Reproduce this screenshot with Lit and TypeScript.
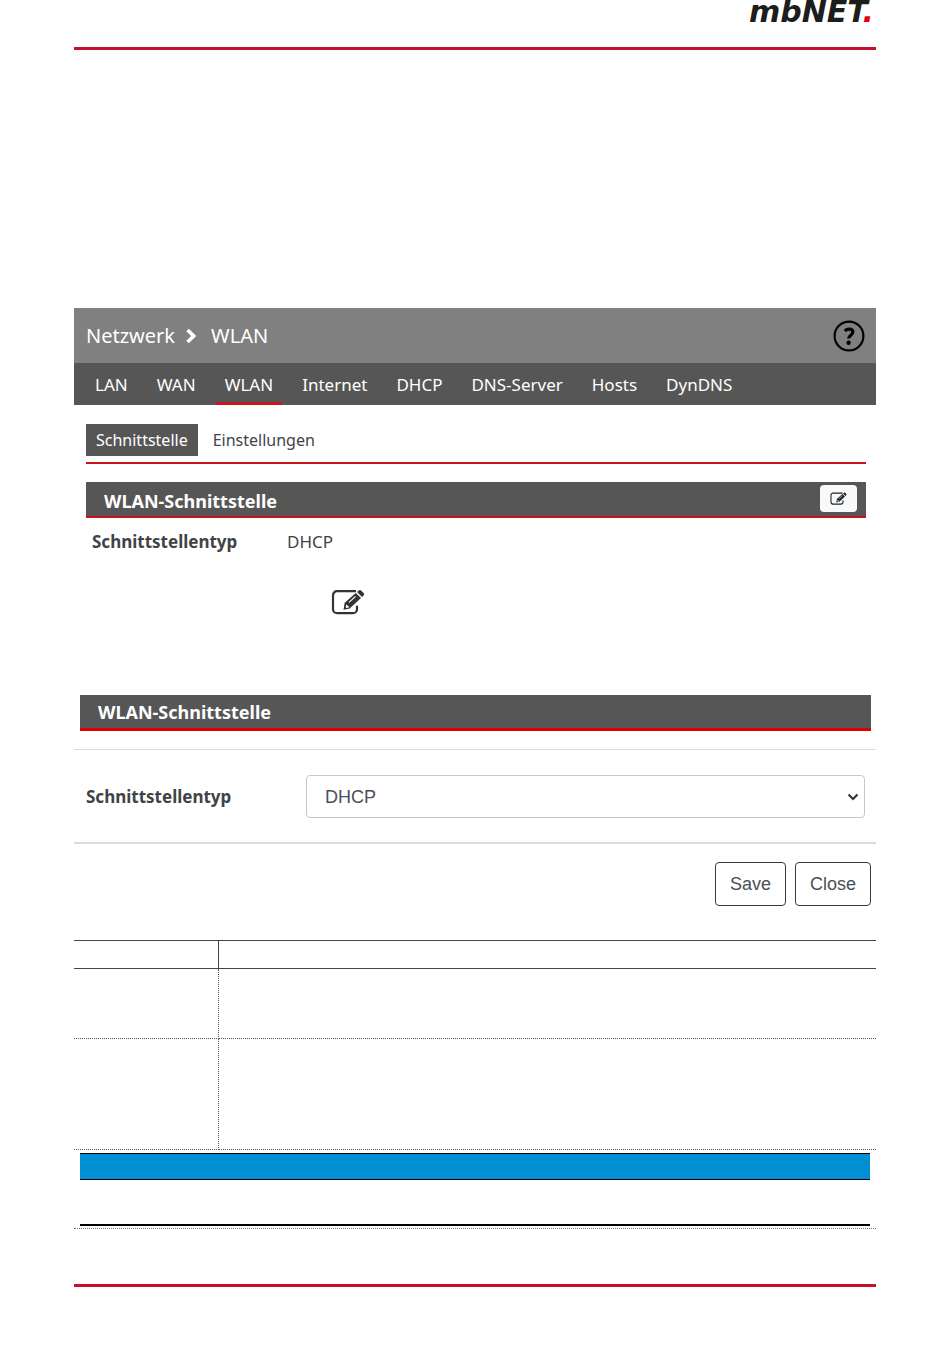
import { LitElement, html, css, svg } from "lit";
import { customElement, property, state } from "lit/decorators.js";

const editGlyph = svg`
  <path d="M25 2.200H6a4 4 0 0 0-4 4v14a4 4 0 0 0 4 4h16a4 4 0 0 0 4-4v-3.500" fill="none" stroke="currentColor" stroke-width="2.200"/>
  <path d="M12.500 20.800l1.200-7L24.800 4l5.200 5-11.300 10.600z" fill="currentColor"/>
  <path d="M26 3l1.700-1.500q1.300-1 2.600.2l2.300 2.200q1.200 1.300 0 2.600L31 8z" fill="currentColor"/>
  <path d="M15.400 15.400l3 2.900-2.900.8-.8-.8z" fill="#fff"/>
  <path d="M18 13.300l6.500-6" stroke="#fff" stroke-width="1.100" fill="none"/>`;

@customElement("edit-icon")
export class EditIcon extends LitElement {
  static styles = css`
    :host { display: block; }
    .glyph { display: block; width: 100%; height: 100%; }
  `;
  render() {
    return html`<svg class="glyph" viewBox="0 0 34 26" aria-hidden="true">${editGlyph}</svg>`;
  }
}

@customElement("panel-head")
export class PanelHead extends LitElement {
  @property() heading = "";
  static styles = css`
    :host {
      display: flex;
      align-items: center;
      justify-content: space-between;
      box-sizing: border-box;
      height: 36px;
      padding: 0 9px 0 18px;
      background: #575656;
      color: #fff;
      border-bottom: 2px solid #c4161c;
    }
    .heading { margin: 0; font-size: 18px; line-height: 24px; font-weight: 700; }
  `;
  render() {
    return html`<h2 class="heading">${this.heading}</h2><slot></slot>`;
  }
}

@customElement("app-root")
export class AppRoot extends LitElement {
  @state() private tab = "WLAN";
  @state() private subtab = "Schnittstelle";

  private tabs = ["LAN", "WAN", "WLAN", "Internet", "DHCP", "DNS-Server", "Hosts", "DynDNS"];
  private subtabs = ["Schnittstelle", "Einstellungen"];

  static styles = css`
    :host {
      display: block;
      padding: 0 74px;
      background: #fff;
      color: #3f4347;
      font-family: "Noto Sans", "Open Sans", sans-serif;
      font-size: 17px;
      line-height: 24px;
    }
    .top {
      display: flex;
      justify-content: flex-end;
      box-sizing: border-box;
      height: 50px;
      padding-right: 2px;
      border-bottom: 3px solid #c8102e;
    }
    .logo {
      font: italic 700 30px/24px "DejaVu Sans", sans-serif;
      color: #1d1d1b;
    }
    .dot { color: #e2001a; }
    .view { margin-top: 258px; }
    .title {
      display: flex;
      align-items: center;
      height: 55px;
      padding: 0 11px 0 12px;
      background: #808080;
      color: #fff;
      font-size: 20px;
    }
    .chevron { width: 12px; height: 16px; margin: 0 14px 0 10px; }
    .help { margin-left: auto; padding: 0; border: 0; background: none; color: #000; }
    .help-icon { display: block; width: 32px; height: 32px; }
    .tabs {
      display: flex;
      gap: 11px;
      height: 42px;
      padding: 0 12px;
      background: #575656;
    }
    .tab {
      box-sizing: border-box;
      padding: 10px 9px 0;
      color: #fff;
      text-decoration: none;
      border-bottom: 3px solid transparent;
    }
    .tab.on { border-bottom-color: #c4161c; }
    .body { padding: 19px 10px 0 12px; }
    .subtabs {
      display: flex;
      gap: 5px;
      padding-bottom: 6px;
      margin-bottom: 18px;
      border-bottom: 2px solid #c4161c;
      font-size: 16px;
    }
    .subtab { padding: 4px 10px; color: #3f4347; text-decoration: none; }
    .subtab.on { background: #575656; color: #fff; }
    .view-head { padding-top: 4px; }
    .edit {
      display: grid;
      place-items: center;
      width: 37px;
      height: 27px;
      padding: 0;
      border: 0;
      border-radius: 4px;
      background: #f8f9fa;
      color: #212529;
      margin-bottom: 5px;
    }
    .edit-small { width: 17px; height: 13px; }
    .info {
      display: grid;
      grid-template-columns: 195px 1fr;
      margin: 12px 0 0;
      padding-left: 6px;
    }
    .term { font-weight: 700; }
    .value { margin: 0; }
    .edit-large { width: 34px; height: 26px; margin: 35px 0 0 257px; color: #333; }
    .form-head { margin: 80px 5px 0 6px; border-bottom: 3px solid #dc0000; }
    .form {
      display: grid;
      grid-template-columns: 220px 1fr;
      align-items: center;
      margin-top: 18px;
      padding: 25px 11px 24px 12px;
      border-top: 1px solid #dcdcdc;
      border-bottom: 2px solid #dcdcdc;
    }
    .label { font-weight: 700; }
    .pick { display: grid; align-items: center; }
    .select {
      grid-area: 1 / 1;
      appearance: none;
      box-sizing: border-box;
      width: 100%;
      height: 43px;
      padding: 0 18px;
      border: 1px solid #c4c8cc;
      border-radius: 4px;
      background: #fff;
      color: #495057;
      font: 18px/24px "Liberation Sans", sans-serif;
    }
    .caret { grid-area: 1 / 1; justify-self: end; width: 12px; height: 8px; margin-right: 6px; pointer-events: none; }
    .actions { display: flex; justify-content: flex-end; gap: 9px; padding: 18px 5px 0; }
    .button {
      height: 44px;
      padding: 0 14px;
      border: 1px solid #343a40;
      border-radius: 4px;
      background: #fff;
      color: #495057;
      font: 18px/24px "Liberation Sans", sans-serif;
    }
    .grid {
      width: 100%;
      margin-top: 34px;
      border-collapse: collapse;
      table-layout: fixed;
    }
    .first { width: 144px; }
    .cell { padding: 0; border-bottom: 1px dotted #555; }
    .cell.key { border-right: 1px dotted #555; }
    .head .cell { height: 27px; border-top: 1px solid #444; border-bottom: 1px solid #444; }
    .head .key { border-right: 1px solid #444; }
    .short .cell { height: 69px; }
    .tall .cell { height: 110px; }
    .note {
      padding: 3px 6px 2px;
      border-bottom: 1px dotted #777;
    }
    .note-bar {
      height: 25px;
      background: #008fd3;
      border-top: 1px solid #000;
      border-bottom: 1px solid #000;
    }
    .note-body { height: 44px; border-bottom: 2px solid #000; }
    .foot { margin-top: 55px; border-top: 3px solid #c8102e; height: 73px; }
  `;

  render() {
    return html`
      <header class="top"><span class="logo">mbNET<span class="dot">.</span></span></header>
      <main>
        <section class="view">
          <div class="title">
            <span>Netzwerk</span>
            <svg class="chevron" viewBox="0 0 12 16" aria-hidden="true">
              <path d="M2.500 2l6.200 6-6.200 6" fill="none" stroke="#fff" stroke-width="3.600" />
            </svg>
            <span>WLAN</span>
            <button class="help" aria-label="Hilfe">
              <svg class="help-icon" viewBox="0 0 32 32" aria-hidden="true">
                <circle cx="16" cy="16" r="14.4" fill="none" stroke="#000" stroke-width="2.200" />
                <path d="M11.800 11c1.400-1.400 2.800-1.900 4.300-1.900 2.400 0 3.800 1.200 3.800 3 0 3-4.300 3.200-4.300 6.500" fill="none" stroke="#000" stroke-width="3.200" />
                <circle cx="15.600" cy="22.800" r="2.200" />
              </svg>
            </button>
          </div>
          <nav class="tabs">
            ${this.tabs.map(
              (t) => html`<a class="tab ${t === this.tab ? "on" : ""}" href="#" @click=${() => (this.tab = t)}>${t}</a>`
            )}
          </nav>
          <div class="body">
            <nav class="subtabs">
              ${this.subtabs.map(
                (t) => html`<a class="subtab ${t === this.subtab ? "on" : ""}" href="#" @click=${() => (this.subtab = t)}>${t}</a>`
              )}
            </nav>
            <panel-head class="view-head" heading="WLAN-Schnittstelle">
              <button class="edit" aria-label="Bearbeiten"><edit-icon class="edit-small"></edit-icon></button>
            </panel-head>
            <dl class="info">
              <dt class="term">Schnittstellentyp</dt>
              <dd class="value">DHCP</dd>
            </dl>
          </div>
        </section>
        <edit-icon class="edit-large"></edit-icon>
        <section>
          <panel-head class="form-head" heading="WLAN-Schnittstelle"></panel-head>
          <div class="form">
            <label class="label" for="type">Schnittstellentyp</label>
            <div class="pick">
              <select class="select" id="type"><option>DHCP</option></select>
              <svg class="caret" viewBox="0 0 12 8" aria-hidden="true">
                <path d="M1.500 1.500L6 6l4.500-4.500" fill="none" stroke="#343a40" stroke-width="2.200" />
              </svg>
            </div>
          </div>
          <div class="actions">
            <button class="button">Save</button>
            <button class="button">Close</button>
          </div>
        </section>
        <table class="grid">
          <colgroup><col class="first" /><col /></colgroup>
          <thead>
            <tr class="head"><th class="cell key"></th><th class="cell"></th></tr>
          </thead>
          <tbody>
            <tr class="short"><td class="cell key"></td><td class="cell"></td></tr>
            <tr class="tall"><td class="cell key"></td><td class="cell"></td></tr>
          </tbody>
        </table>
        <div class="note">
          <div class="note-bar"></div>
          <div class="note-body"></div>
        </div>
      </main>
      <footer class="foot"></footer>
    `;
  }
}
